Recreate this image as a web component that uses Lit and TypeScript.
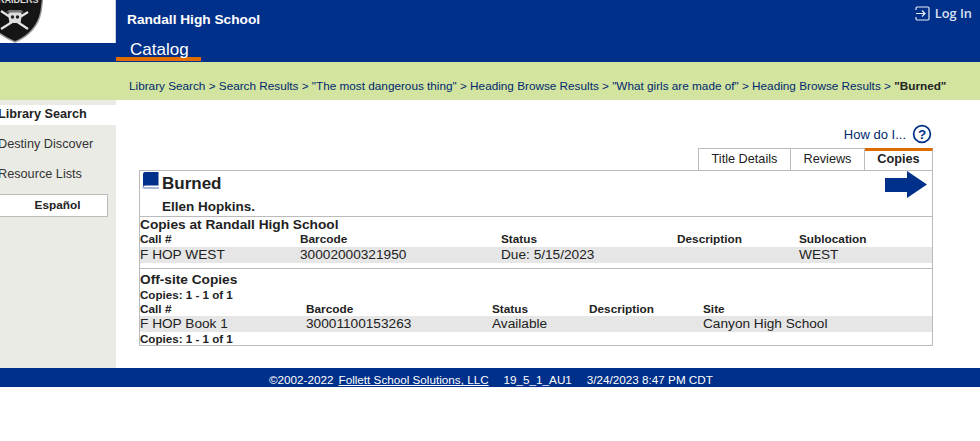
import { LitElement, html, css } from "lit";
import { customElement } from "lit/decorators.js";

@customElement("app-root")
export class AppRoot extends LitElement {
  static styles = css`
    :host { display: block; width: 980px; height: 441px; overflow: hidden; background: #fff; font-family: "Liberation Sans", Arial, sans-serif; color: #222; }
    .header { height: 62px; background: #00308a; display: flex; }
    .logo { width: 115px; height: 43px; background: #fff; border-right: 1px solid #c9cfe0; overflow: hidden; flex: none; }
    .logo svg { display: block; }
    .hmain { flex: 1; display: flex; flex-direction: column; position: relative; }
    .school { color: #fff; font-size: 13.7px; font-weight: bold; padding: 12px 0 0 11px; line-height: 15px; }
    .cat { margin-top: 13px; width: 85px; height: 21px; box-sizing: border-box; border-bottom: 4px solid #e06c00; color: #fff; font-size: 17px; line-height: 19px; padding-left: 14px; white-space: nowrap; }
    .login { position: absolute; top: 4px; right: 8px; display: flex; align-items: center; gap: 5px; color: #d8e2f2; font-family: "Open Sans", sans-serif; font-size: 12.8px; font-weight: 600; line-height: 18px; }
    .crumb { height: 38px; background: #d2e4a0; box-sizing: border-box; padding: 16px 0 0 129px; font-size: 11.75px; line-height: 15px; color: #00286e; white-space: nowrap; }
    .crumb b { color: #222; }
    .body { display: flex; height: 268px; }
    .side { width: 116px; background: #ebebe5; padding-top: 5px; box-sizing: border-box; flex: none; }
    .nav { height: 30px; font-size: 12.7px; line-height: 30px; margin-left: -2px; color: #333; white-space: nowrap; }
    .nav.on { background: #fff; margin-left: 0; height: 20px; line-height: 18px; font-weight: bold; color: #222; text-indent: -2px; overflow: hidden; margin-bottom: 4px; }
    .lang { margin-top: 5px; width: 108px; height: 23px; box-sizing: border-box; background: #fff; border: 1px solid #bbb; border-left: none; font-size: 11.8px; font-weight: bold; text-align: center; line-height: 21px; color: #222; padding-left: 8px; }
    .content { flex: 1; padding: 24px 47px 0 23px; min-width: 0; }
    .how { display: flex; justify-content: flex-end; align-items: center; gap: 6px; height: 20px; padding-right: 1px; color: #00286e; font-size: 13px; }
    .tabs { display: flex; justify-content: flex-end; margin-top: 4px; }
    .tab { box-sizing: border-box; height: 22px; border: 1px solid #bbb; border-bottom: none; font-size: 12.7px; line-height: 20px; text-align: center; color: #222; background: #fff; }
    .t1 { width: 93px; } .t2 { width: 74px; border-left: none; }
    .t3 { width: 68px; border-top: 3px solid #e06c00; font-weight: bold; line-height: 17px; border-left: none; }
    .box { border: 1px solid #bbb; box-sizing: border-box; width: 794px; height: 176px; display: flex; flex-direction: column; background: #fff; }
    .title { height: 46px; flex: none; box-sizing: border-box; border-bottom: 1px solid #bbb; display: flex; position: relative; padding: 0 0 0 2px; }
    .book { margin-right: 2px; flex: none; }
    h1 { font-size: 17px; line-height: 20px; margin: 3px 0 0; font-weight: bold; color: #222; }
    .auth { font-size: 13.5px; font-weight: bold; line-height: 16px; margin-top: 5px; color: #222; }
    .arrow { position: absolute; right: 5px; top: 0; }
    .sec { height: 14px; font-size: 13.7px; line-height: 14px; font-weight: bold; color: #222; margin-top: 1px; white-space: nowrap; }
    .rule + .sec { margin-top: 4px; }
    .grid { display: grid; }
    .a { grid-template-columns: 160px 201px 176px 122px 1fr; }
    .o { grid-template-columns: 166px 186px 97px 114px 1fr; }
    .hd { font-size: 11.8px; font-weight: bold; line-height: 15px; color: #222; white-space: nowrap; }
    .cell { background: #e6e6e6; font-size: 13.66px; line-height: 16px; height: 16px; color: #222; white-space: nowrap; }
    .rule { border-bottom: 1px solid #bbb; margin-top: 5px; }
    .small { font-size: 11.6px; font-weight: bold; line-height: 13px; color: #222; white-space: nowrap; }
    .sec + .small { margin-top: 1px; }
    .o { margin-top: 1px; }
    .o .hd { line-height: 14px; }
    .footer { height: 19px; background: #00308a; color: #fff; font-size: 11.7px; line-height: 24px; padding-left: 269px; overflow: hidden; box-sizing: border-box; display: flex; white-space: nowrap; }
    .footer u { text-decoration: underline; margin-left: 5px; margin-right: 15px; }
    .footer .ver { margin-right: 15px; }
  `;

  private row(kind: string, heads: string[], cells: string[]) {
    return html`<div class="grid ${kind}">
      ${heads.map((h) => html`<div class="hd">${h}</div>`)}
      ${cells.map((c) => html`<div class="cell">${c}</div>`)}
    </div>`;
  }

  render() {
    return html`
      <div class="header">
        <div class="logo">
          <svg width="115" height="43" viewBox="0 0 115 43">
            <path d="M-8 -4H43L41 12C38 26 29 36 15 42C8 39 -2 34 -8 26Z" fill="#151515" stroke="#9a9a9a" stroke-width="1.4"/>
            <text x="-2" y="3" font-size="9" font-weight="bold" fill="#ddd" font-family="Liberation Sans">RAIDERS</text>
            <g stroke="#e4e4e4" stroke-width="2.2">
              <line x1="1" y1="11" x2="28" y2="29"/><line x1="28" y1="12" x2="1" y2="29"/>
            </g>
            <path d="M8 14Q15 6 22 14L20.5 23H9.5Z" fill="#ddd"/>
            <path d="M6 12.5H24L21 10H9Z" fill="#777"/>
            <circle cx="12.5" cy="17" r="1.7" fill="#222"/><circle cx="17.5" cy="17" r="1.7" fill="#222"/>
          </svg>
        </div>
        <div class="hmain">
          <div class="school">Randall High School</div>
          <div class="cat">Catalog</div>
          <div class="login">
            <svg width="15" height="15" viewBox="0 0 15 15" fill="none" stroke="#e6ecf6" stroke-width="1.2">
              <path d="M1 4V2.2Q1 1 2.2 1H12.8Q14 1 14 2.2V12.8Q14 14 12.8 14H2.2Q1 14 1 12.8V11"/>
              <path d="M1 7.5H10M7 4.5L10 7.5L7 10.5"/>
            </svg>
            <span>Log In</span>
          </div>
        </div>
      </div>
      <div class="crumb">Library Search &gt; Search Results &gt; "The most dangerous thing" &gt; Heading Browse Results &gt; "What girls are made of" &gt; Heading Browse Results &gt; <b>"Burned"</b></div>
      <div class="body">
        <div class="side">
          <div class="nav on">Library Search</div>
          <div class="nav">Destiny Discover</div>
          <div class="nav">Resource Lists</div>
          <div class="lang">Español</div>
        </div>
        <div class="content">
          <div class="how">
            <span>How do I...</span>
            <svg width="20" height="20" viewBox="0 0 20 20">
              <circle cx="10" cy="10" r="8.4" fill="#fff" stroke="#00308a" stroke-width="1.7"/>
              <text x="10" y="14.8" font-size="13.5" font-weight="bold" text-anchor="middle" fill="#00308a" font-family="Liberation Sans">?</text>
            </svg>
          </div>
          <div class="tabs">
            <div class="tab t1">Title Details</div>
            <div class="tab t2">Reviews</div>
            <div class="tab t3">Copies</div>
          </div>
          <div class="box">
            <div class="title">
              <svg class="book" width="18" height="18" viewBox="0 0 18 18">
                <path d="M3 1H16.5V14.5H3.5Q1 14.5 1 16V3Q1 1 3 1Z" fill="#00308a"/>
                <path d="M1 15.5Q1 17 3 17H17" fill="none" stroke="#8fa3c8" stroke-width="1.4"/>
              </svg>
              <div>
                <h1>Burned</h1>
                <div class="auth">Ellen Hopkins.</div>
              </div>
              <svg class="arrow" width="42" height="27" viewBox="0 0 42 27">
                <path d="M0 7H22V0L42 13.5L22 27V21H0Z" fill="#00308a"/>
              </svg>
            </div>
            <div class="sec">Copies at Randall High School</div>
            ${this.row("a", ["Call #", "Barcode", "Status", "Description", "Sublocation"], ["F HOP WEST", "30002000321950", "Due: 5/15/2023", "", "WEST"])}
            <div class="rule"></div>
            <div class="sec">Off-site Copies</div>
            <div class="small">Copies: 1 - 1 of 1</div>
            ${this.row("o", ["Call #", "Barcode", "Status", "Description", "Site"], ["F HOP Book 1", "30001100153263", "Available", "", "Canyon High School"])}
            <div class="small">Copies: 1 - 1 of 1</div>
          </div>
        </div>
      </div>
      <div class="footer"><span>©2002-2022</span><u>Follett School Solutions, LLC</u><span class="ver">19_5_1_AU1</span><span>3/24/2023 8:47 PM CDT</span></div>
    `;
  }
}
